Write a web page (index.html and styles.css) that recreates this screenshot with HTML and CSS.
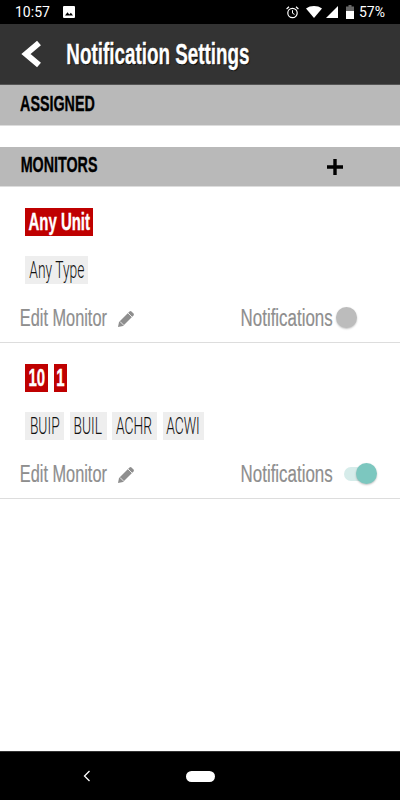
FILE: index.html
```html
<!DOCTYPE html>
<html lang="en">
<head>
  <meta charset="UTF-8">
  <title>Notification Settings</title>
  <link rel="stylesheet" href="styles.css">
</head>
<body>
  <div class="screen">
    <div class="status-bar">
      <span class="status-time">10:57</span>
      <svg class="status-img" width="12" height="12" viewBox="0 0 12 12"><path fill="#fff" d="M1 0h10a1 1 0 0 1 1 1v10a1 1 0 0 1-1 1H1a1 1 0 0 1-1-1V1a1 1 0 0 1 1-1z"/><path fill="#000" d="M2 9.500l2.500-3.200 1.800 2.100 1.600-1.600 2.100 2.700z"/></svg>
      <span class="status-right">
        <svg class="alarm" width="13" height="13" viewBox="0 0 13 13"><circle cx="6.500" cy="7" r="4.700" fill="none" stroke="#fff" stroke-width="1.200"/><path d="M6.500 4.200v3l2 1.200" fill="none" stroke="#fff"/><path d="M0.600 3L3 .8M12.400 3L10 .8" stroke="#fff" stroke-width="1.200"/></svg>
        <svg class="wifi" width="16" height="12" viewBox="0 0 16 12"><path fill="#fff" d="M0 2.500C4.500-.8 11.500-.8 16 2.500L8 12z"/></svg>
        <svg class="signal" width="12" height="12" viewBox="0 0 12 12"><path fill="#fff" d="M12 0v12H0z"/></svg>
        <svg class="battery" width="8" height="14" viewBox="0 0 8 14"><path fill="#666" d="M2.500 0h3v1.500H8V6H0V1.500h2.500z"/><path fill="#fff" d="M0 6h8v8H0z"/></svg>
        <span>57%</span>
      </span>
    </div>

    <header class="app-header">
      <svg class="back-icon" width="22" height="28" viewBox="0 0 22 28"><path d="M18 3L5 14l13 11" fill="none" stroke="#fff" stroke-width="6"/></svg>
      <h1 class="app-title"><span class="squeeze">Notification Settings</span></h1>
    </header>

    <div class="section-bar section-assigned">
      <span class="section-label label-assigned"><span class="squeeze">ASSIGNED</span></span>
    </div>
    <div class="section-gap"></div>

    <div class="section-bar section-monitors">
      <span class="section-label label-monitors"><span class="squeeze">MONITORS</span></span>
      <svg class="plus-icon" width="16" height="16" viewBox="0 0 16 16"><path d="M6.300 0h3.400v6.300H16v3.400H9.700V16H6.300V9.700H0V6.300h6.300z"/></svg>
    </div>

    <div class="monitor">
      <div class="chips">
        <span class="chip-unit w-any-unit"><span class="squeeze">Any Unit</span></span>
      </div>
      <div class="chips chips-type">
        <span class="chip-type w-any-type"><span class="squeeze">Any Type</span></span>
      </div>
      <div class="monitor-foot">
        <span class="foot-link">
          <span class="foot-label label-edit"><span class="squeeze">Edit Monitor</span></span>
          <svg class="pencil" width="17" height="17" viewBox="0 0 17 17"><path fill="#8e8e8e" d="M0 17l1-5L11.500 1.500a1.500 1.500 0 0 1 2 0l2 2a1.500 1.500 0 0 1 0 2L5 16z"/><path stroke="#fff" stroke-width=".8" d="M10 3l4 4M2 11.500l3.500 3.500"/></svg>
        </span>
        <span class="foot-toggle">
          <span class="foot-label label-notify"><span class="squeeze">Notifications</span></span>
          <span class="toggle"><span class="knob"></span></span>
        </span>
      </div>
    </div>

    <div class="monitor">
      <div class="chips">
        <span class="chip-unit w-ten"><span class="squeeze">10</span></span>
        <span class="chip-unit w-one"><span class="squeeze">1</span></span>
      </div>
      <div class="chips chips-type">
        <span class="chip-type w-buip"><span class="squeeze">BUIP</span></span>
        <span class="chip-type w-buil"><span class="squeeze">BUIL</span></span>
        <span class="chip-type w-achr"><span class="squeeze">ACHR</span></span>
        <span class="chip-type w-acwi"><span class="squeeze">ACWI</span></span>
      </div>
      <div class="monitor-foot">
        <span class="foot-link">
          <span class="foot-label label-edit"><span class="squeeze">Edit Monitor</span></span>
          <svg class="pencil" width="17" height="17" viewBox="0 0 17 17"><path fill="#8e8e8e" d="M0 17l1-5L11.500 1.500a1.500 1.500 0 0 1 2 0l2 2a1.500 1.500 0 0 1 0 2L5 16z"/><path stroke="#fff" stroke-width=".8" d="M10 3l4 4M2 11.500l3.500 3.500"/></svg>
        </span>
        <span class="foot-toggle">
          <span class="foot-label label-notify"><span class="squeeze">Notifications</span></span>
          <span class="toggle on"><span class="knob"></span></span>
        </span>
      </div>
    </div>

    <div class="spacer"></div>

    <nav class="nav-bar">
      <svg class="nav-back" width="8" height="12" viewBox="0 0 8 12"><path d="M6.500 1L1.500 6l5 5" fill="none" stroke="#fff" stroke-width="1.300"/></svg>
      <span class="nav-home"></span>
    </nav>
  </div>
</body>
</html>
```

FILE: styles.css
```css
* {
  box-sizing: border-box;
}
html, body {
  margin: 0;
  padding: 0;
}
body {
  background: white;
  font-family: "Liberation Sans", sans-serif;
}
.screen {
  width: 400px;
  height: 800px;
  display: flex;
  flex-direction: column;
  overflow: hidden;
}

/* no condensed font installed, so the text is squeezed inside fixed width boxes */
.squeeze {
  display: block;
  flex: none;
  white-space: nowrap;
  transform: scaleX(0.65);
  -webkit-text-stroke: 0.35px currentColor;
}

.status-bar {
  height: 24px;
  background: black;
  color: white;
  display: flex;
  align-items: center;
  padding: 0 15px;
  font-family: Roboto, sans-serif;
  font-size: 14px;
}
.status-img {
  margin-left: 13px;
}
.status-right {
  margin-left: auto;
  display: flex;
  align-items: center;
  gap: 4px;
  font-size: 14px;
}
.alarm {
  margin-right: 3px;
}
.battery {
  margin: 0 1px 0 4px;
}
.app-header {
  height: 61px;
  background: #333;
  border-bottom: 1px solid #555;
  display: flex;
  align-items: center;
  padding-left: 21px;
}
.back-icon {
  flex: none;
}
.app-title {
  display: flex;
  justify-content: center;
  width: 183px;
  margin: 0 0 0 23px;
  color: white;
  font-size: 29px;
  font-weight: bold;
  text-shadow: 1px 1px 1px #000;
}
.section-bar {
  background: #b9b9b9;
  color: black;
  display: flex;
  align-items: center;
  padding: 0 0 2px 21px;
  border-bottom: 1px solid #ddd;
}
.section-assigned {
  height: 41px;
}
.section-monitors {
  height: 40px;
  padding-bottom: 3px;
}
.section-label {
  display: flex;
  justify-content: center;
  font-size: 22px;
  font-weight: bold;
}
.label-assigned {
  width: 72px;
}
.label-monitors {
  width: 77px;
}
.section-gap {
  height: 21px;
}
.plus-icon {
  margin: 4px 57px 0 auto;
}
.monitor {
  height: 156px;
  border-bottom: 1px solid #ddd;
  padding: 21px 0 0 25px;
}
.chips {
  display: flex;
  gap: 6px;
  height: 28px;
}
.chips-type {
  margin-top: 20px;
  gap: 5.5px;
}
.chip-unit, .chip-type {
  display: flex;
  justify-content: center;
  line-height: 28px;
}
.chip-unit {
  background: #bf0000;
  color: white;
  font-size: 23px;
  font-weight: bold;
}
.chip-type {
  background: #eee;
  color: #111;
  font-family: Roboto, sans-serif;
  font-weight: 300;
  font-size: 23px;
}
.chip-type .squeeze {
  margin-top: 1px;
  transform: scaleX(0.6);
  -webkit-text-stroke: 0;
}
.w-any-unit { width: 68px; }
.w-any-type { width: 63px; }
.w-ten { width: 23px; }
.w-one { width: 13px; }
.w-buip { width: 39px; }
.w-buil { width: 37px; }
.w-achr { width: 45px; }
.w-acwi { width: 41.5px; }

.monitor-foot {
  display: flex;
  align-items: center;
  height: 28px;
  margin: 20px 0 0 -5px;
  color: #8e8e8e;
  font-size: 23px;
}
.foot-label {
  display: flex;
  justify-content: center;
  padding-top: 1px;
}
.foot-label .squeeze {
  -webkit-text-stroke: 0.2px currentColor;
}
.label-edit {
  width: 87px;
}
.label-edit .squeeze {
  transform: scaleX(0.71);
}
.label-notify {
  width: 92px;
}
.label-notify .squeeze {
  transform: scaleX(0.735);
}
.foot-link {
  display: flex;
  align-items: center;
  gap: 11px;
  width: 221px;
}
.foot-toggle {
  display: flex;
  align-items: center;
}
.toggle {
  display: block;
  width: 32px;
  height: 14px;
  margin-left: 11px;
  border-radius: 7px;
  position: relative;
}
.toggle.on {
  background: #d6ecea;
}
.knob {
  position: absolute;
  top: -4px;
  left: -8px;
  width: 21px;
  height: 21px;
  border-radius: 50%;
  background: #bcbcbc;
  box-shadow: 0 1px 2px rgba(0, 0, 0, 0.25);
}
.toggle.on .knob {
  left: 12px;
  background: #7cc7bf;
}
.spacer {
  flex: 1;
}
.nav-bar {
  height: 49px;
  background: black;
  border-top: 1px solid #333;
  position: relative;
  display: flex;
  align-items: center;
  justify-content: center;
}
.nav-back {
  position: absolute;
  left: 83px;
  top: 18px;
}
.nav-home {
  width: 29px;
  height: 11px;
  border-radius: 6px;
  background: white;
}
```
